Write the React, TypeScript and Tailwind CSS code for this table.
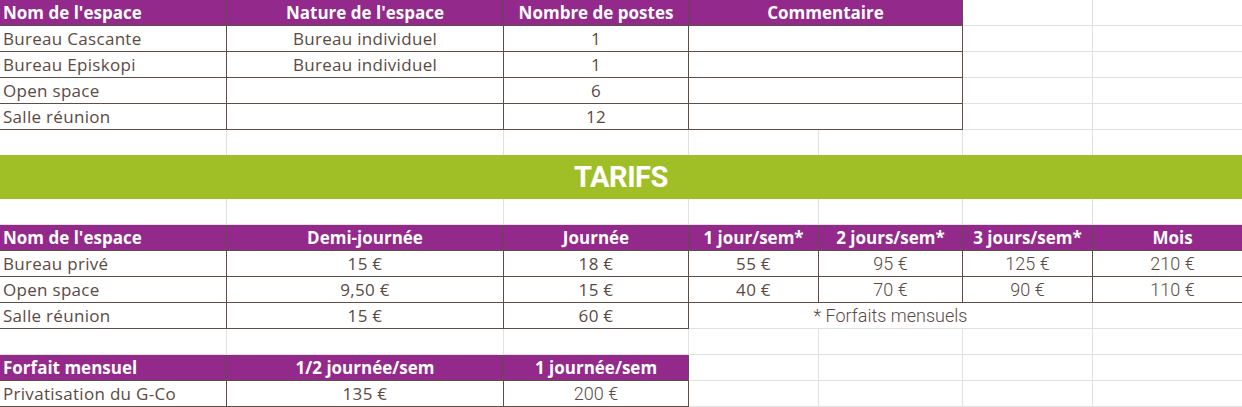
import React from "react";

type Cell = {
  w: number;
  t?: string;
  kind?: "h" | "d" | "e";
  align?: "l" | "c";
  alt?: boolean;
  r?: "d" | "l" | "n";
  b?: "d" | "l" | "n";
};

const W = { A: 227, B: 277, C: 185, D: 130, E: 144, F: 130, G: 160 };

const dark = "border-[#5e4f46]";
const light = "border-[#e1e1e1]";

function CellView({ c, h }: { c: Cell; h: number }) {
  const r = c.r ?? "l";
  const b = c.b ?? "l";
  const cls = [
    "flex items-end shrink-0 overflow-visible whitespace-nowrap",
    c.kind === "h" ? "bg-[#93298a] text-white font-bold" : "text-[#5b4a42]",
    c.align === "c" ? "justify-center" : "justify-start pl-[3px]",
    r === "n" ? "" : r === "d" ? "border-r " + dark : "border-r " + light,
    b === "n" ? "" : b === "d" ? "border-b " + dark : "border-b " + light,
  ].join(" ");
  const txt = c.alt
    ? "font-['Roboto',sans-serif] font-light text-[18px] leading-[20px] pb-[2px]"
    : c.kind === "h"
    ? "text-[17px] leading-[20px] pb-[2px]"
    : "text-[17px] tracking-[0.3px] leading-[20px] pb-[2px]";
  return (
    <div className={cls} style={{ width: c.w, height: h }}>
      <span className={txt}>{c.t ?? ""}</span>
    </div>
  );
}

function Row({ h, cells }: { h: number; cells: Cell[] }) {
  return (
    <div className="flex">
      {cells.map((c, i) => (
        <CellView key={i} c={c} h={h} />
      ))}
    </div>
  );
}

const H = (w: number, t: string, align: "l" | "c" = "c"): Cell => ({ w, t, kind: "h", align, r: "d", b: "d" });
const D = (w: number, t = "", align: "l" | "c" = "c", alt = false): Cell => ({ w, t, kind: "d", align, r: "d", b: "d", alt });
const E = (w: number, b: "d" | "l" | "n" = "l"): Cell => ({ w, kind: "e", r: "l", b });

export default function App() {
  const top = [
    ["Bureau Cascante", "Bureau individuel", "1"],
    ["Bureau Episkopi", "Bureau individuel", "1"],
    ["Open space", "", "6"],
    ["Salle réunion", "", "12"],
  ];
  return (
    <div className="w-[1242px] h-[407px] overflow-hidden bg-white font-['Open_Sans',sans-serif]">
      <Row
        h={26}
        cells={[
          H(W.A, "Nom de l'espace", "l"),
          H(W.B, "Nature de l'espace"),
          H(W.C, "Nombre de postes"),
          H(W.D + W.E, "Commentaire"),
          E(W.F),
          E(W.G),
        ]}
      />
      {top.map((r, i) => (
        <Row
          key={i}
          h={26}
          cells={[D(W.A, r[0], "l"), D(W.B, r[1]), D(W.C, r[2]), D(W.D + W.E), E(W.F), E(W.G)]}
        />
      ))}
      <Row h={25} cells={[E(W.A, "n"), E(W.B, "n"), E(W.C, "n"), E(W.D, "n"), E(W.E, "n"), E(W.F, "n"), E(W.G, "n")]} />
      <div className="h-[44px] bg-[#a0bf27] flex items-center justify-center">
        <span className="text-white font-bold text-[29px] tracking-[-0.5px] font-['Roboto',sans-serif] leading-none">
          TARIFS
        </span>
      </div>
      <Row h={26} cells={[E(W.A, "d"), E(W.B, "d"), E(W.C, "d"), E(W.D, "d"), E(W.E, "d"), E(W.F, "d"), E(W.G, "d")]} />
      <Row
        h={26}
        cells={[
          H(W.A, "Nom de l'espace", "l"),
          H(W.B, "Demi-journée"),
          H(W.C, "Journée"),
          H(W.D, "1 jour/sem*"),
          H(W.E, "2 jours/sem*"),
          H(W.F, "3 jours/sem*"),
          H(W.G, "Mois"),
        ]}
      />
      <Row
        h={26}
        cells={[
          D(W.A, "Bureau privé", "l"),
          D(W.B, "15 €"),
          D(W.C, "18 €"),
          D(W.D, "55 €"),
          D(W.E, "95 €", "c", true),
          D(W.F, "125 €", "c", true),
          D(W.G, "210 €", "c", true),
        ]}
      />
      <Row
        h={26}
        cells={[
          D(W.A, "Open space", "l"),
          D(W.B, "9,50 €"),
          D(W.C, "15 €"),
          D(W.D, "40 €"),
          D(W.E, "70 €", "c", true),
          D(W.F, "90 €", "c", true),
          D(W.G, "110 €", "c", true),
        ]}
      />
      <Row
        h={26}
        cells={[
          D(W.A, "Salle réunion", "l"),
          D(W.B, "15 €"),
          D(W.C, "60 €"),
          { w: W.D + W.E + W.F, t: "* Forfaits mensuels", kind: "d", align: "c", alt: true, r: "l", b: "l" },
          E(W.G),
        ]}
      />
      <Row h={26} cells={[E(W.A, "d"), E(W.B, "d"), E(W.C, "d"), E(W.D), E(W.E), E(W.F), E(W.G)]} />
      <Row
        h={26}
        cells={[H(W.A, "Forfait mensuel", "l"), H(W.B, "1/2 journée/sem"), H(W.C, "1 journée/sem"), E(W.D), E(W.E), E(W.F), E(W.G)]}
      />
      <Row
        h={26}
        cells={[
          D(W.A, "Privatisation du G-Co", "l"),
          D(W.B, "135 €"),
          D(W.C, "200 €", "c", true),
          E(W.D),
          E(W.E),
          E(W.F),
          E(W.G),
        ]}
      />
    </div>
  );
}
